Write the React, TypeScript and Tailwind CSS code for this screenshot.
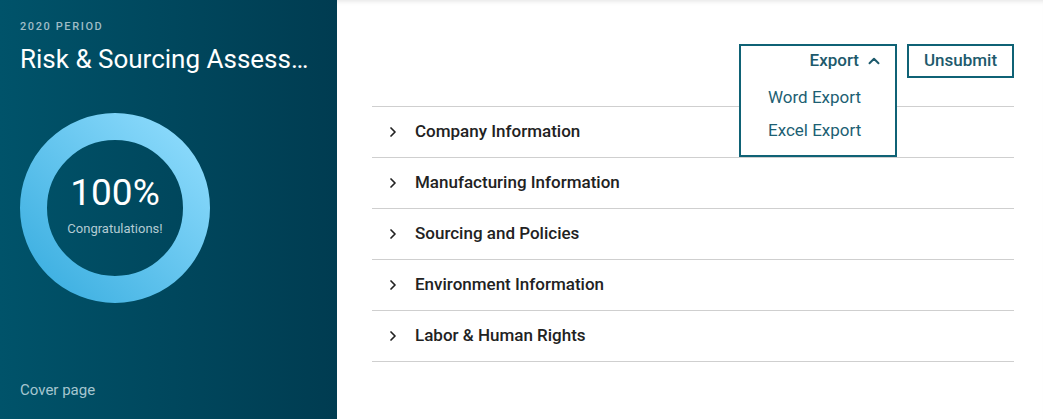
import { ChevronRight, ChevronUp } from 'lucide-react';

const sections = [
  'Company Information',
  'Manufacturing Information',
  'Sourcing and Policies',
  'Environment Information',
  'Labor & Human Rights',
];

function ProgressRing() {
  return (
    <div className="relative w-[190px] h-[190px]">
      <svg width="190" height="190" viewBox="0 0 190 190">
        <defs>
          <linearGradient id="ring" x1="1" y1="0" x2="0" y2="1">
            <stop offset="0%" stopColor="#8fdcfd" />
            <stop offset="100%" stopColor="#3aaee0" />
          </linearGradient>
        </defs>
        <circle cx="95" cy="95" r="81.5" fill="none" stroke="url(#ring)" strokeWidth="27" />
      </svg>
      <div className="absolute inset-0 flex flex-col items-center justify-center">
        <div className="text-[37px] leading-none text-white mt-[-4px]">100%</div>
        <div className="text-[13px] mt-[8px] text-[#b3cbd3]">Congratulations!</div>
      </div>
    </div>
  );
}

export default function App() {
  return (
    <div className="flex w-[1043px] h-[419px] overflow-hidden bg-white" style={{ fontFamily: 'Roboto, "Liberation Sans", sans-serif' }}>
      {/* Sidebar */}
      <aside className="w-[337px] flex-shrink-0 flex flex-col px-5 pt-[20px] pb-[19px] bg-gradient-to-r from-[#00536a] to-[#003c51]">
        <div className="text-[11px] font-medium tracking-[1.6px] text-[#9fbcc6] leading-[14px]">2020 PERIOD</div>
        <div className="mt-[9px] text-[26px] leading-[32px] text-white truncate w-[296px]">Risk &amp; Sourcing Assessment</div>
        <div className="mt-[38px]">
          <ProgressRing />
        </div>
        <div className="mt-auto text-[15px] text-[#a6c6d0] leading-[20px]">Cover page</div>
      </aside>

      {/* Main */}
      <main className="flex-1 pl-[35px] pr-[29px] pt-[44px] shadow-[inset_0_5px_5px_-4px_rgba(0,0,0,0.12)]">
        <div className="flex justify-end gap-[10px]">
          <div className="relative w-[158px] h-[34px]">
            <div className="absolute top-0 left-0 w-[158px] h-[113px] border-2 border-[#0f6275] bg-white z-10">
              <button className="w-full h-[30px] flex items-center justify-end pr-[12px] gap-[6px] text-[17px] font-medium text-[#1d5a6c]">
                Export
                <ChevronUp size={18} strokeWidth={2.6} />
              </button>
              <div className="pl-[27px] pt-[11px] flex flex-col gap-[13px] text-[17px] text-[#1d5f73] leading-[20px]">
                <div>Word Export</div>
                <div>Excel Export</div>
              </div>
            </div>
          </div>
          <button className="w-[107px] h-[34px] border-2 border-[#0f6275] text-[17px] font-medium text-[#1d5a6c]">Unsubmit</button>
        </div>

        <div className="mt-[28px] border-t border-[#cfcfcf]">
          {sections.map((s) => (
            <div key={s} className="h-[51px] flex items-center border-b border-[#cfcfcf] pl-[13px]">
              <ChevronRight size={16} strokeWidth={2.6} className="text-[#222]" />
              <span className="ml-[14px] text-[17px] font-medium text-[#222]">{s}</span>
            </div>
          ))}
        </div>
      </main>
    </div>
  );
}
